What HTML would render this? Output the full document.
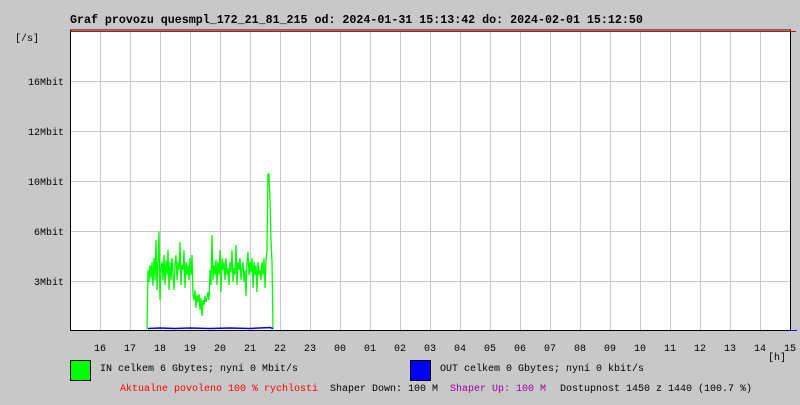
<!DOCTYPE html>
<html><head><meta charset="utf-8"><style>
body{margin:0;width:800px;height:400px;background:#c8c8c8;overflow:hidden}
svg text{font-family:"Liberation Mono","DejaVu Sans Mono",monospace;font-size:10px;fill:#000}
</style></head><body>
<svg width="800" height="400" xmlns="http://www.w3.org/2000/svg">
<rect x="70" y="30" width="720" height="300" fill="#fff"/>
<g stroke="#c8c8c8" stroke-width="1">
<path d="M100.5 31V330M130.5 31V330M160.5 31V330M190.5 31V330M220.5 31V330M250.5 31V330M280.5 31V330M310.5 31V330M340.5 31V330M370.5 31V330M400.5 31V330M430.5 31V330M460.5 31V330M490.5 31V330M520.5 31V330M550.5 31V330M580.5 31V330M610.5 31V330M640.5 31V330M670.5 31V330M700.5 31V330M730.5 31V330M760.5 31V330"/>
<path d="M64 81.5H790M64 131.5H790M64 181.5H790M64 231.5H790M64 281.5H790"/>
</g>
<polyline fill="none" stroke="#00ff00" stroke-width="1.3" points="147,329 148,270 149,282 150,265 151,278 152,262 153,286 154,258 155,280 156,240 157,290 158,262 159,232 160,300 161,268 162,262 163,280 164,255 165,285 166,260 167,275 168,250 169,290 170,262 171,280 172,258 173,275 174,290 175,265 176,255 177,280 178,262 179,270 180,242 181,285 182,265 183,270 184,250 185,288 186,262 187,275 188,265 189,280 190,258 191,275 192,255 193,295 194,300 195,290 196,308 197,295 198,302 199,294 200,310 201,298 202,316 203,300 204,305 205,296 206,302 207,298 208,292 209,300 210,270 211,285 212,235 213,280 214,265 215,275 216,260 217,285 218,262 219,275 220,250 221,292 222,258 223,270 224,262 225,280 226,258 227,275 228,268 229,285 230,262 231,272 232,250 233,282 234,268 235,275 236,245 237,285 238,262 239,270 240,258 241,280 242,268 243,262 244,282 245,270 246,296 247,262 248,252 249,275 250,262 251,272 252,258 253,288 254,262 255,275 256,265 257,292 258,262 259,275 260,270 261,280 262,262 263,275 264,258 265,288 266,262 267,250 268,174 269,174 270,200 271,240 272,262 273,329"/>
<polyline fill="none" stroke="#0000ff" stroke-width="1.5" points="148,328.5 160,328 175,328.5 190,328 210,328.5 230,328 250,328.5 270,327.5 273,328.5"/>
<path d="M70.5 30V330.5H790.5V30H70" fill="none" stroke="#000" stroke-width="1"/>
<path d="M70 31.5H796" stroke="#e00000" stroke-width="1"/>
<path d="M790 330.5H797" stroke="#0000ff"/>
<text x="70" y="23" style="font-weight:bold;font-size:11.65px">Graf provozu quesmpl_172_21_81_215 od: 2024-01-31 15:13:42 do: 2024-02-01 15:12:50</text>
<text x="15" y="41">[/s]</text>
<g text-anchor="end"><text x="64" y="85">16Mbit</text><text x="64" y="135">12Mbit</text><text x="64" y="185">10Mbit</text><text x="64" y="235">6Mbit</text><text x="64" y="285">3Mbit</text></g>
<g text-anchor="middle">
<text x="100" y="351">16</text><text x="130" y="351">17</text><text x="160" y="351">18</text><text x="190" y="351">19</text><text x="220" y="351">20</text><text x="250" y="351">21</text><text x="280" y="351">22</text><text x="310" y="351">23</text><text x="340" y="351">00</text><text x="370" y="351">01</text><text x="400" y="351">02</text><text x="430" y="351">03</text><text x="460" y="351">04</text><text x="490" y="351">05</text><text x="520" y="351">06</text><text x="550" y="351">07</text><text x="580" y="351">08</text><text x="610" y="351">09</text><text x="640" y="351">10</text><text x="670" y="351">11</text><text x="700" y="351">12</text><text x="730" y="351">13</text><text x="760" y="351">14</text><text x="790" y="351">15</text>
<text x="777" y="360">[h]</text></g>
<rect x="70.5" y="360.5" width="20" height="20" fill="#00ff00" stroke="#000"/>
<text x="100" y="371">IN celkem 6 Gbytes; nyní 0 Mbit/s</text>
<rect x="410.5" y="360.5" width="20" height="20" fill="#0000ff" stroke="#000"/>
<text x="440" y="371">OUT celkem 0 Gbytes; nyní 0 kbit/s</text>
<text x="120" y="391" style="fill:#ff0000">Aktualne povoleno 100 % rychlosti</text>
<text x="330" y="391">Shaper Down: 100 M</text>
<text x="450" y="391" style="fill:#a000a0">Shaper Up: 100 M</text>
<text x="560" y="391">Dostupnost 1450 z 1440 (100.7 %)</text>
</svg>
</body></html>
